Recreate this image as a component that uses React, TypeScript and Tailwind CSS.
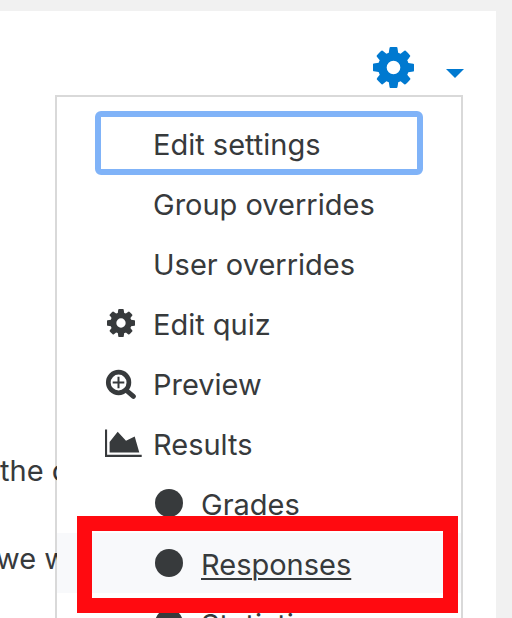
import React from "react";

const COG =
  "M1024 896q0-106-75-181t-181-75-181 75-75 181 75 181 181 75 181-75 75-181zm512-109v222q0 12-8 23t-20 13l-185 28q-19 54-39 91 35 50 107 138 10 12 10 25t-9 23q-27 37-99 108t-94 71q-12 0-26-9l-138-108q-44 23-91 38-16 136-29 186-7 28-36 28h-222q-14 0-24.5-8.5t-11.5-21.5l-28-184q-49-16-90-37l-141 107q-10 9-25 9-14 0-25-11-126-114-165-168-7-10-7-23 0-12 8-23 15-21 51-66.5t54-70.5q-27-50-41-99l-183-27q-13-2-21-12.5t-8-23.5v-222q0-12 8-23t19-13l186-28q14-46 39-92-40-57-107-138-10-12-10-24 0-10 9-23 26-36 98.5-107.5t94.5-71.5q13 0 26 10l138 107q44-23 91-38 16-136 29-186 7-28 36-28h222q14 0 24.5 8.5t11.5 21.5l28 184q49 16 90 37l142-107q9-9 24-9 13 0 25 10 129 119 165 170 7 8 7 22 0 12-8 23-15 21-51 66.5t-54 70.5q26 50 41 98l183 28q13 2 21 12.5t8 23.5z";

function Cog({ className }: { className: string }) {
  return (
    <svg viewBox="0 128 1536 1536" className={className} fill="currentColor" aria-hidden="true">
      <path d={COG} />
    </svg>
  );
}

function SearchPlus() {
  return (
    <svg viewBox="0 -1 32 32" className="size-8" fill="none" stroke="currentColor" aria-hidden="true">
      <circle cx="13.6" cy="14.5" r="10.3" strokeWidth="4.7" />
      <path d="M21.5 22.5 28.4 28.4" strokeWidth="4.9" strokeLinecap="round" />
      <path d="M13.5 8.7v11.6M7.7 14.5h11.6" strokeWidth="2" />
    </svg>
  );
}

function AreaChart() {
  return (
    <svg viewBox="0 0 37 28" className="h-7 w-[37px]" fill="currentColor" aria-hidden="true">
      <path d="M0 0.6h2.1v25.1h34.6v2.3H0z" />
      <path d="M4.6 23.4V13l8.1-10.3 8.3 9 8.7-4.3 4.6 16z" />
    </svg>
  );
}

function Item({ label, icon }: { label: string; icon?: React.ReactNode }) {
  return (
    <li>
      <a href="#" className="flex h-[60px] items-center pl-12">
        <span className="w-12 shrink-0">{icon}</span>
        <span className="pt-1">{label}</span>
      </a>
    </li>
  );
}

function SubItem({ label, active = false }: { label: string; active?: boolean }) {
  return (
    <li>
      <a
        href="#"
        className={
          active
            ? "flex h-[60px] items-center gap-[18px] bg-[#f8f9fb] pl-[98px] underline decoration-2 underline-offset-3"
            : "flex h-[60px] items-center gap-[18px] pl-[98px]"
        }
      >
        <span className="size-7 shrink-0 rounded-full bg-[#373a3c]" />
        <span className="pt-1">{label}</span>
      </a>
    </li>
  );
}

export default function App() {
  return (
    <div className="h-screen overflow-hidden bg-[#f1f1f1] pt-[11px] pr-4 font-['Inter','Liberation_Sans',sans-serif] text-[29px] leading-10 text-[#373a3c]">
      <main className="relative h-full bg-white">
        <header className="flex justify-end pt-9 pr-8">
          <button type="button" aria-label="Actions menu" className="flex items-center gap-8 text-[#0079d0]">
            <Cog className="size-[41px]" />
            <svg viewBox="0 0 18 9" className="mt-3 h-[9px] w-[18px]" fill="currentColor" aria-hidden="true">
              <path d="M0 0h18L9 9z" />
            </svg>
          </button>
        </header>
        <div className="flex flex-col gap-12 overflow-hidden pt-[363px] whitespace-nowrap">
          <p>the c</p>
          <p className="-ml-1">we w</p>
        </div>

        <nav className="absolute top-[84px] right-[33px] w-[408px] border-2 border-black/15 bg-white bg-clip-padding py-4">
          <ul>
            <li className="flex h-[60px] items-center px-[38px]">
              <a
                href="#"
                className="flex h-16 w-full shrink-0 items-center rounded-md border-6 border-[#80b3f8] pl-[52px] outline-none"
              >
                <span className="pt-1">Edit settings</span>
              </a>
            </li>
            <Item label="Group overrides" />
            <Item label="User overrides" />
            <Item label="Edit quiz" icon={<Cog className="ml-0.5 size-7" />} />
            <Item label="Preview" icon={<SearchPlus />} />
            <Item label="Results" icon={<AreaChart />} />
            <SubItem label="Grades" />
            <SubItem label="Responses" active />
            <SubItem label="Statistics" />
          </ul>
          <div className="pointer-events-none absolute top-[419px] right-[3px] left-5 h-[97px] border-[15px] border-[#ff0a10]" />
        </nav>
      </main>
    </div>
  );
}
